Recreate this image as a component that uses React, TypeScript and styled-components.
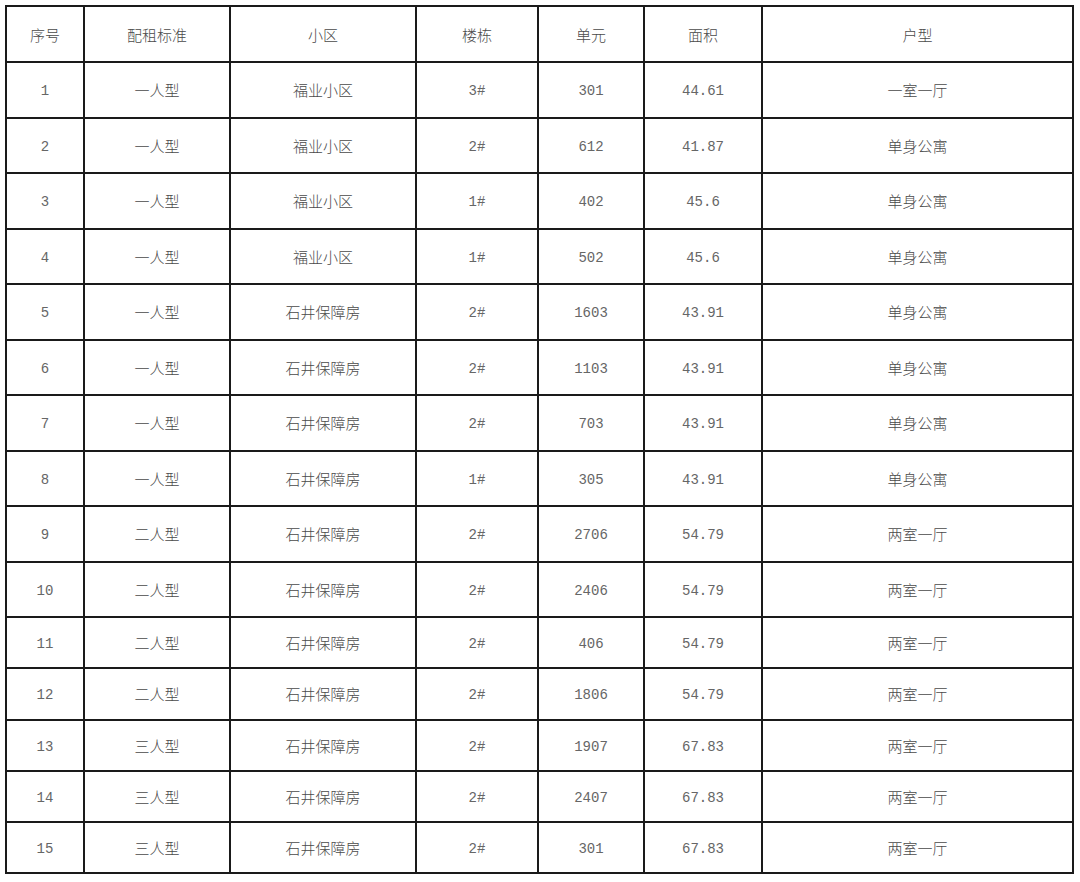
import React from "react";
import styled, { createGlobalStyle } from "styled-components";

const Global = createGlobalStyle`
  html, body { margin: 0; padding: 0; background: #ffffff; }
  body { font-family: "Noto Sans CJK SC", "Liberation Sans", sans-serif; }
`;

const Page = styled.div`
  padding: 5px 0 0 5px;
`;

const Table = styled.table`
  border-collapse: collapse;
  table-layout: fixed;
  width: 1067px;
  border: 2px solid #111;
`;

const Row = styled.tr<{ $h: number }>`
  height: ${(p) => p.$h}px;
`;

const Cell = styled.td`
  border: 2px solid #1a1a1a;
  padding: 0;
  text-align: center;
  vertical-align: middle;
  color: #4a4a4a;
  font-size: 15px;
  font-family: "Noto Sans CJK SC", sans-serif;
  font-weight: 300;
  line-height: 1;
`;

const HeadCell = styled(Cell).attrs({ as: "th" })`
  font-weight: 300;
`;

const Num = styled.span`
  font-family: "Liberation Mono", "DejaVu Sans Mono", monospace;
  font-size: 14px;
  color: #666;
`;

const widths = [78, 146, 186, 122, 106, 118, 311];
const headers = ["序号", "配租标准", "小区", "楼栋", "单元", "面积", "户型"];

const rows: [string, string, string, string, string, string][] = [
  ["一人型", "福业小区", "3#", "301", "44.61", "一室一厅"],
  ["一人型", "福业小区", "2#", "612", "41.87", "单身公寓"],
  ["一人型", "福业小区", "1#", "402", "45.6", "单身公寓"],
  ["一人型", "福业小区", "1#", "502", "45.6", "单身公寓"],
  ["一人型", "石井保障房", "2#", "1603", "43.91", "单身公寓"],
  ["一人型", "石井保障房", "2#", "1103", "43.91", "单身公寓"],
  ["一人型", "石井保障房", "2#", "703", "43.91", "单身公寓"],
  ["一人型", "石井保障房", "1#", "305", "43.91", "单身公寓"],
  ["二人型", "石井保障房", "2#", "2706", "54.79", "两室一厅"],
  ["二人型", "石井保障房", "2#", "2406", "54.79", "两室一厅"],
  ["二人型", "石井保障房", "2#", "406", "54.79", "两室一厅"],
  ["二人型", "石井保障房", "2#", "1806", "54.79", "两室一厅"],
  ["三人型", "石井保障房", "2#", "1907", "67.83", "两室一厅"],
  ["三人型", "石井保障房", "2#", "2407", "67.83", "两室一厅"],
  ["三人型", "石井保障房", "2#", "301", "67.83", "两室一厅"],
];

const rowHeight = (i: number) => (i < 10 ? 55.5 : 51.3);

export default function App() {
  return (
    <Page>
      <Global />
      <Table>
        <colgroup>
          {widths.map((w, i) => (
            <col key={i} style={{ width: w }} />
          ))}
        </colgroup>
        <thead>
          <Row $h={56}>
            {headers.map((h) => (
              <HeadCell key={h}>{h}</HeadCell>
            ))}
          </Row>
        </thead>
        <tbody>
          {rows.map((r, i) => (
            <Row key={i} $h={rowHeight(i)}>
              <Cell>
                <Num>{i + 1}</Num>
              </Cell>
              <Cell>{r[0]}</Cell>
              <Cell>{r[1]}</Cell>
              <Cell>
                <Num>{r[2]}</Num>
              </Cell>
              <Cell>
                <Num>{r[3]}</Num>
              </Cell>
              <Cell>
                <Num>{r[4]}</Num>
              </Cell>
              <Cell>{r[5]}</Cell>
            </Row>
          ))}
        </tbody>
      </Table>
    </Page>
  );
}
